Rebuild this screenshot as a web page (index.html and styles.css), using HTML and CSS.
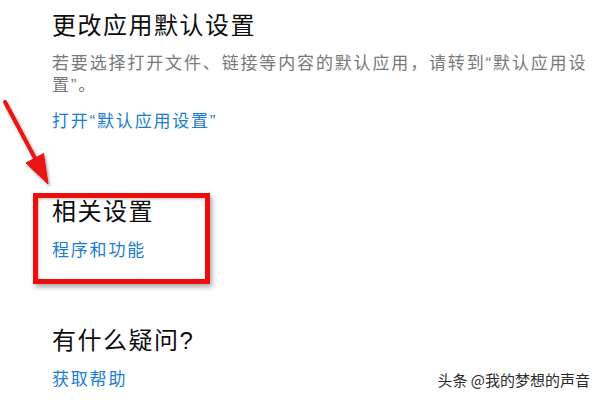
FILE: index.html
```html
<!DOCTYPE html>
<html lang="zh-CN">
<head>
<meta charset="utf-8">
<title>默认应用</title>
<link rel="stylesheet" href="styles.css">
</head>
<body>
<main class="page">
  <section class="section first">
    <h2 class="title">更改应用默认设置</h2>
    <p class="desc">若要选择打开文件、链接等内容的默认应用，请转到“默认应用设置”。</p>
    <a class="link" href="#">打开“默认应用设置”</a>
  </section>
  <section class="section">
    <h2 class="title">相关设置</h2>
    <a class="link" href="#">程序和功能</a>
  </section>
  <section class="section">
    <h2 class="title">有什么疑问?</h2>
    <a class="link" href="#">获取帮助</a>
  </section>
</main>

<svg class="arrow" width="70" height="100" viewBox="0 95 70 100" aria-hidden="true">
  <defs>
    <filter id="sh" x="-50%" y="-50%" width="200%" height="200%">
      <feDropShadow dx="1.5" dy="2" stdDeviation="1.6" flood-color="#000" flood-opacity="0.35"/>
    </filter>
  </defs>
  <g filter="url(#sh)" fill="#ea1212" stroke="#ea1212">
    <line x1="5" y1="102" x2="37" y2="162" stroke-width="4" stroke-linecap="round"/>
    <polygon points="48,184 43.5,153.5 26,163" stroke-width="1" stroke-linejoin="round"/>
  </g>
</svg>
<div class="highlight" aria-hidden="true"></div>
<div class="watermark">头条 @我的梦想的声音</div>
</body>
</html>
```

FILE: styles.css
```css
html, body {
  margin: 0;
  padding: 0;
  background: #ffffff;
}

body {
  width: 600px;
  height: 400px;
  overflow: hidden;
  position: relative;
  font-family: "Liberation Sans", "Noto Sans CJK SC", sans-serif;
}

.page {
  display: flex;
  flex-direction: column;
  gap: 62px;
  padding: 9px 0 0 52px;
}

.section {
  display: flex;
  flex-direction: column;
  align-items: flex-start;
  gap: 11px;
}

.section.first {
  gap: 0;
}

.title {
  margin: 0;
  font-size: 24px;
  line-height: 34px;
  font-weight: normal;
  letter-spacing: 1.5px;
  color: #0d0d0d;
}

.desc {
  margin: 10px 0 0;
  max-width: 540px;
  font-size: 17px;
  line-height: 22px;
  letter-spacing: 1.85px;
  color: #787878;
}

.first .link {
  margin-top: 14px;
}

.link {
  font-size: 17px;
  line-height: 22px;
  letter-spacing: 1.8px;
  color: #1a7cd2;
  text-decoration: none;
}

.arrow {
  position: absolute;
  left: 0;
  top: 95px;
}

.highlight {
  position: absolute;
  left: 33px;
  top: 193px;
  width: 167px;
  height: 81px;
  border: 5px solid #ee0d0d;
  box-shadow: 2px 3px 5px rgba(0, 0, 0, 0.35), inset 1px 1px 3px rgba(0, 0, 0, 0.25);
}

.watermark {
  position: absolute;
  right: 10px;
  top: 369px;
  font-family: "Noto Sans CJK SC", sans-serif;
  font-size: 15px;
  line-height: 22px;
  color: #2a2a2a;
  text-shadow: 0 0 2px #ffffff, 0 0 2px #ffffff;
}
```
